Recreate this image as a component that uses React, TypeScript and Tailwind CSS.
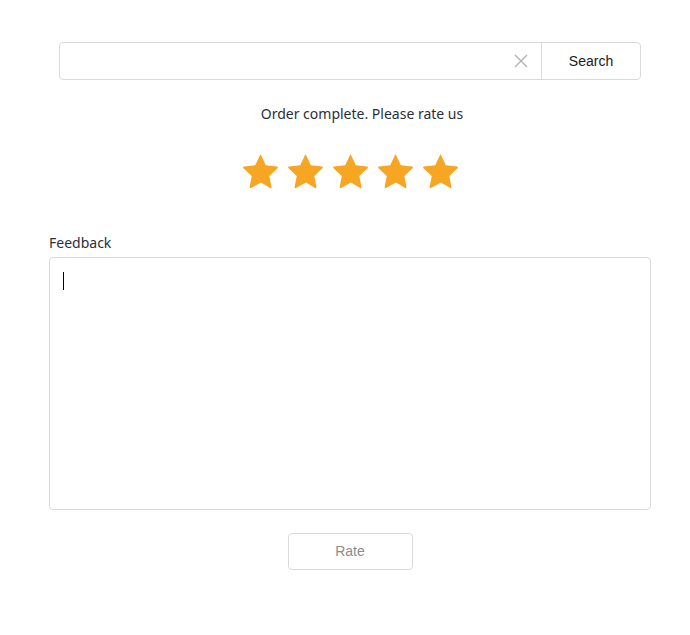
import React from "react";

function Star() {
  return (
    <svg width="38" height="36" viewBox="0 0 24 23" fill="#f6a623">
      <path
        d="M12 1.2l3.1 6.6 7.2.9c.5.1.7.7.3 1l-5.3 5 1.4 7.1c.1.5-.4.9-.9.6L12 18.9l-6.4 3.5c-.5.3-1-.1-.9-.6l1.4-7.1-5.3-5c-.4-.3-.2-.9.3-1l7.2-.9L11.4 1.2c.2-.4.8-.4.6 0z"
        strokeLinejoin="round"
      />
    </svg>
  );
}

export default function App() {
  return (
    <div className="w-[690px] h-[635px] bg-white" style={{ fontFamily: '"Noto Sans", "Open Sans", sans-serif' }}>
      <div className="ml-[49px] w-[602px] pt-[42px] flex flex-col">
        <div className="mx-[10px] h-[38px] flex border border-[#d9d9d9] rounded-[4px]">
          <div className="flex-1 flex items-center justify-end pr-[12px]">
            <svg width="16" height="16" viewBox="0 0 16 16" stroke="#b3b3b3" strokeWidth="1.4" fill="none">
              <path d="M2 2L14 14M14 2L2 14" />
            </svg>
          </div>
          <div
            className="w-[99px] border-l border-[#d9d9d9] flex items-center justify-center text-[14px] text-[#1a1a1a]"
            style={{ fontFamily: '"Liberation Sans", Arial, sans-serif' }}
          >
            Search
          </div>
        </div>
        <div className="mt-[24px] pl-[24px] text-center text-[14px] leading-[20px] text-[#2a2f3a]">
          Order complete. Please rate us
        </div>
        <div className="mt-[29px] flex justify-center gap-[7px] pl-[2px]">
          <Star />
          <Star />
          <Star />
          <Star />
          <Star />
        </div>
        <div className="mt-[44px] text-[14px] leading-[20px] text-[#2a2f3a]">Feedback</div>
        <div className="mt-[4px] h-[253px] border border-[#d9d9d9] rounded-[4px] pl-[13px] pt-[14px]">
          <div className="w-[1px] h-[18px] bg-black" />
        </div>
        <div className="mt-[23px] flex justify-center">
          <div
            className="w-[125px] h-[37px] border border-[#d9d9d9] rounded-[4px] flex items-center justify-center text-[14px] text-[#8c8c8c]"
            style={{ fontFamily: '"Liberation Sans", Arial, sans-serif' }}
          >
            Rate
          </div>
        </div>
      </div>
    </div>
  );
}
